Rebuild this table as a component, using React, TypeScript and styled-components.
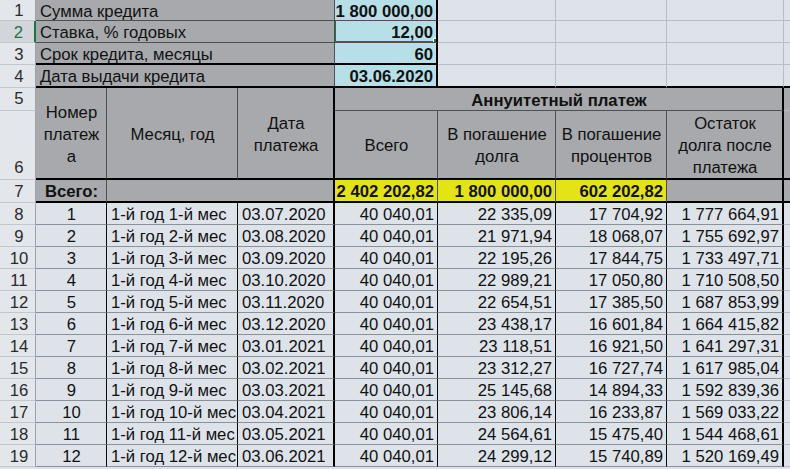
import React from 'react';
import styled, { createGlobalStyle } from 'styled-components';

const Global = createGlobalStyle`
  html, body { margin: 0; padding: 0; background: #dee3ea; overflow: hidden; }
  body { font-family: 'Liberation Sans', Arial, sans-serif; }
`;

const GRAY = '#a7a9ac';
const LIGHT = '#dee3ea';
const BLUE = '#b6dfe7';
const YELLOW = '#e4e414';

const GRID = '1px solid #b8bec6';
const DARK = '1px solid #4c4f53';
const ROWLINE = '1px solid #8a9199';
const BLACK = '1px solid #0a0a0a';
const THICK = '2px solid #000';

const Sheet = styled.div`
  display: grid;
  grid-template-columns: 36px 71px 131px 97px 103px 118px 111px 117px 6px;
  grid-template-rows: 21px 22px 22px 23px 23px 69px 23px repeat(12, 22px);
  width: 790px;
  height: 469px;
  overflow: hidden;
  font-size: 16.7px;
  color: #111;
`;

type CellProps = {
  $col: string;
  $row: string;
  $bg?: string;
  $align?: 'left' | 'center' | 'right';
  $bold?: boolean;
  $br?: string;
  $bb?: string;
};

const Cell = styled.div<CellProps>`
  grid-column: ${(p) => p.$col};
  grid-row: ${(p) => p.$row};
  box-sizing: border-box;
  position: relative;
  display: flex;
  align-items: center;
  justify-content: ${(p) =>
    p.$align === 'right' ? 'flex-end' : p.$align === 'center' ? 'center' : 'flex-start'};
  text-align: ${(p) => p.$align ?? 'left'};
  padding: 3px 3px 0 4px;
  background: ${(p) => p.$bg ?? LIGHT};
  font-weight: ${(p) => (p.$bold ? 700 : 400)};
  border-right: ${(p) => p.$br ?? GRID};
  border-bottom: ${(p) => p.$bb ?? GRID};
  white-space: nowrap;
  line-height: 22px;
  overflow: hidden;
`;

const RowHead = styled.div<{ $row: string; $sel?: boolean }>`
  grid-column: 1;
  grid-row: ${(p) => p.$row};
  box-sizing: border-box;
  display: flex;
  align-items: center;
  justify-content: center;
  padding: 2px 0 0 3px;
  background: ${(p) => (p.$sel ? '#d2d6da' : '#e3e6ea')};
  color: ${(p) => (p.$sel ? '#217346' : '#2b2b2b')};
  border-right: ${(p) => (p.$sel ? '2px solid #217346' : '1px solid #9ea3a9')};
  border-bottom: 1px solid #c3c7cc;
  font-size: 16.7px;
`;

const RowHeadBottom = styled(RowHead)`
  align-items: flex-end;
  padding-bottom: 1px;
`;

const Selection = styled.div`
  position: absolute;
  left: -1px;
  top: -2px;
  right: -2px;
  bottom: -1px;
  border: 2px solid #217346;
  pointer-events: none;
`;

const Handle = styled.div`
  position: absolute;
  right: -4px;
  bottom: -4px;
  width: 5px;
  height: 5px;
  background: #217346;
  border: 1px solid #fff;
`;

const params: [string, string][] = [
  ['Сумма кредита', '1 800 000,00'],
  ['Ставка, % годовых', '12,00'],
  ['Срок кредита, месяцы', '60'],
  ['Дата выдачи кредита', '03.06.2020'],
];

const data: [string, string, string, string, string][] = [
  ['03.07.2020', '40 040,01', '22 335,09', '17 704,92', '1 777 664,91'],
  ['03.08.2020', '40 040,01', '21 971,94', '18 068,07', '1 755 692,97'],
  ['03.09.2020', '40 040,01', '22 195,26', '17 844,75', '1 733 497,71'],
  ['03.10.2020', '40 040,01', '22 989,21', '17 050,80', '1 710 508,50'],
  ['03.11.2020', '40 040,01', '22 654,51', '17 385,50', '1 687 853,99'],
  ['03.12.2020', '40 040,01', '23 438,17', '16 601,84', '1 664 415,82'],
  ['03.01.2021', '40 040,01', '23 118,51', '16 921,50', '1 641 297,31'],
  ['03.02.2021', '40 040,01', '23 312,27', '16 727,74', '1 617 985,04'],
  ['03.03.2021', '40 040,01', '25 145,68', '14 894,33', '1 592 839,36'],
  ['03.04.2021', '40 040,01', '23 806,14', '16 233,87', '1 569 033,22'],
  ['03.05.2021', '40 040,01', '24 564,61', '15 475,40', '1 544 468,61'],
  ['03.06.2021', '40 040,01', '24 299,12', '15 740,89', '1 520 169,49'],
];

export default function App() {
  return (
    <>
      <Global />
      <Sheet>
        {params.map(([label, value], i) => {
          const r = String(i + 1);
          const bottom = i >= 2 ? THICK : DARK;
          return (
            <React.Fragment key={r}>
              <RowHead $row={r} $sel={i === 1}>{i + 1}</RowHead>
              <Cell $col="2 / 5" $row={r} $bg={GRAY} $br={DARK} $bb={bottom}>
                {label}
              </Cell>
              <Cell $col="5" $row={r} $bg={BLUE} $bold $align="right" $br={THICK} $bb={bottom}>
                {value}
                {i === 1 && (
                  <Selection>
                    <Handle />
                  </Selection>
                )}
              </Cell>
              <Cell $col="6" $row={r} $bb={i === 3 ? THICK : GRID} />
              <Cell $col="7" $row={r} $bb={i === 3 ? THICK : GRID} />
              <Cell $col="8" $row={r} $bb={i === 3 ? THICK : GRID} />
              <Cell $col="9" $row={r} $br="none" $bb={i === 3 ? THICK : GRID} />
            </React.Fragment>
          );
        })}

        <RowHeadBottom $row="5">5</RowHeadBottom>
        <RowHeadBottom $row="6">6</RowHeadBottom>
        <Cell $col="2" $row="5 / 7" $bg={GRAY} $align="center" $br={DARK} $bb={THICK}>
          Номер
          <br />
          платеж
          <br />а
        </Cell>
        <Cell $col="3" $row="5 / 7" $bg={GRAY} $align="center" $br={DARK} $bb={THICK}>
          Месяц, год
        </Cell>
        <Cell $col="4" $row="5 / 7" $bg={GRAY} $align="center" $br={THICK} $bb={THICK}>
          Дата
          <br />
          платежа
        </Cell>
        <Cell $col="5 / 9" $row="5" $bg={GRAY} $align="center" $bold $br={THICK} $bb={DARK}>
          Аннуитетный платеж
        </Cell>
        <Cell $col="9" $row="5" $bg={GRAY} $br="none" $bb={GRID} />
        <Cell $col="5" $row="6" $bg={GRAY} $align="center" $br={DARK} $bb={THICK}>
          Всего
        </Cell>
        <Cell $col="6" $row="6" $bg={GRAY} $align="center" $br={DARK} $bb={THICK}>
          В погашение
          <br />
          долга
        </Cell>
        <Cell $col="7" $row="6" $bg={GRAY} $align="center" $br={DARK} $bb={THICK}>
          В погашение
          <br />
          процентов
        </Cell>
        <Cell $col="8" $row="6" $bg={GRAY} $align="center" $br={THICK} $bb={THICK}>
          Остаток
          <br />
          долга после
          <br />
          платежа
        </Cell>
        <Cell $col="9" $row="6" $bg={GRAY} $br="none" $bb={THICK} />

        <RowHead $row="7">7</RowHead>
        <Cell $col="2" $row="7" $bg={GRAY} $align="center" $bold $br={DARK} $bb={THICK}>
          Всего:
        </Cell>
        <Cell $col="3 / 5" $row="7" $bg={GRAY} $br={THICK} $bb={THICK} />
        <Cell $col="5" $row="7" $bg={YELLOW} $align="right" $bold $br={DARK} $bb={THICK}>
          2 402 202,82
        </Cell>
        <Cell $col="6" $row="7" $bg={YELLOW} $align="right" $bold $br={DARK} $bb={THICK}>
          1 800 000,00
        </Cell>
        <Cell $col="7" $row="7" $bg={YELLOW} $align="right" $bold $br={DARK} $bb={THICK}>
          602 202,82
        </Cell>
        <Cell $col="8" $row="7" $bg={GRAY} $br={THICK} $bb={THICK} />
        <Cell $col="9" $row="7" $bg={GRAY} $br="none" $bb={THICK} />

        {data.map(([date, total, debt, pct, rest], i) => {
          const r = String(i + 8);
          return (
            <React.Fragment key={r}>
              <RowHead $row={r}>{i + 8}</RowHead>
              <Cell $col="2" $row={r} $align="center" $br={BLACK} $bb={ROWLINE}>
                {i + 1}
              </Cell>
              <Cell $col="3" $row={r} $br={BLACK} $bb={ROWLINE}>
                {`1-й год ${i + 1}-й мес`}
              </Cell>
              <Cell $col="4" $row={r} $br={THICK} $bb={ROWLINE}>
                {date}
              </Cell>
              <Cell $col="5" $row={r} $align="right" $br={BLACK} $bb={ROWLINE}>
                {total}
              </Cell>
              <Cell $col="6" $row={r} $align="right" $br={BLACK} $bb={ROWLINE}>
                {debt}
              </Cell>
              <Cell $col="7" $row={r} $align="right" $br={BLACK} $bb={ROWLINE}>
                {pct}
              </Cell>
              <Cell $col="8" $row={r} $align="right" $br={THICK} $bb={ROWLINE}>
                {rest}
              </Cell>
              <Cell $col="9" $row={r} $br="none" $bb={GRID} />
            </React.Fragment>
          );
        })}
      </Sheet>
    </>
  );
}
